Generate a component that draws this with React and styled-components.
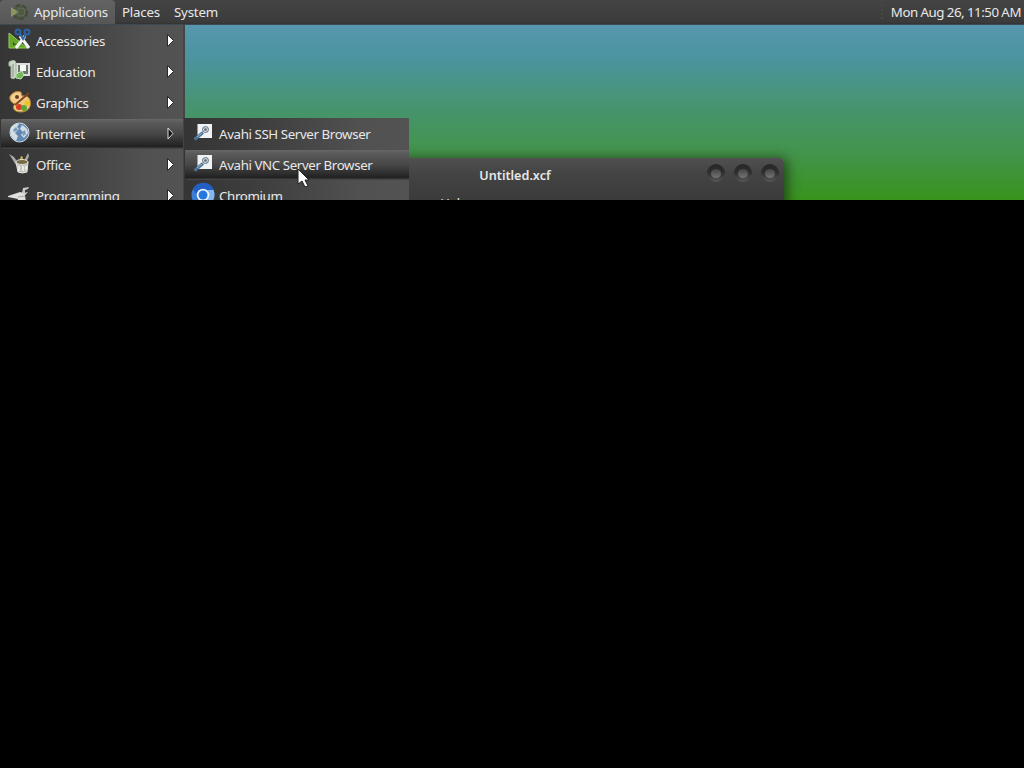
import React from 'react';
import styled, { createGlobalStyle } from 'styled-components';

const Global = createGlobalStyle`
  body { margin: 0; background: #000; overflow: hidden; }
  * { box-sizing: border-box; }
`;
const Screen = styled.div`
  width: 1024px; height: 768px; background: #000;
  font: 13.3px/18px "Noto Sans", sans-serif; color: #e8e8e8;
  letter-spacing: -0.2px;
`;
const Desktop = styled.main`
  position: relative; height: 200px; overflow: hidden;
  background: linear-gradient(#5797b0 25px, #4b94a0 58px, #46946e 108px, #43944c 153px, #38931c 200px);
`;
const Panel = styled.header`
  height: 25px; display: flex; align-items: stretch; white-space: nowrap;
  background: linear-gradient(#444, #3b3b3b 22px, #333 24px, #46626b);
`;
const PanelItem = styled.div`
  display: flex; align-items: center; height: 24px; padding-left: ${p => p.$pad || 7}px;
  width: ${p => p.$w}px; border-radius: 4px 4px 0 0;
  background: ${p => p.$active ? 'linear-gradient(#636363, #575757)' : 'transparent'};
  svg { margin-right: 6px; }
`;
const Clock = styled.time`
  margin-left: auto; height: 24px; display: flex; align-items: center; gap: 7px; padding-right: 3px;
  letter-spacing: -0.45px; word-spacing: -0.3px;
`;
const Grip = styled.i`width: 3px; height: 14px; border-left: 2px dotted #484848;`;
const Menu = styled.nav`
  position: absolute; z-index: 3; left: ${p => p.$x}px; top: ${p => p.$y}px; width: ${p => p.$w}px;
  background: linear-gradient(90deg, #353535, #3d3d3d 30%, #515151 80%, #535353);
  border-right: ${p => p.$edge ? '2px solid #444' : '0'};
  letter-spacing: ${p => p.$edge ? '-0.3px' : '-0.36px'}; word-spacing: -0.2px;
`;
const Item = styled.div`
  height: 31px; display: flex; align-items: center; padding: 0 8px 0 7px; margin-left: 1px; white-space: nowrap;
  border-radius: 3px 0 0 3px;
  background: ${p => p.$active ? 'linear-gradient(transparent 1px, #686868 1px, #5b5b5b 4px, #464646 16px, #202020 29px, #444 30px)' : 'transparent'};
  svg { flex: none; }
`;
const Label = styled.span`flex: 1; margin-left: ${p => p.$gap || 5}px;`;
const Window = styled.section`
  position: absolute; z-index: 1; left: 246px; top: 158px; width: 538px; height: 300px;
  background: linear-gradient(#505050, #444 15px, #3c3c3c 38px); border-radius: 5px;
  box-shadow: 2px 2px 12px 2px #1d3a16cc;
`;
const TitleBar = styled.div`
  height: 35px; display: flex; align-items: center; justify-content: center;
  font-weight: 600; font-size: 12.6px; letter-spacing: 0;
`;
const Controls = styled.div`
  position: absolute; right: 5px; top: 6px; display: flex; gap: 9px;
`;
const ControlButton = styled.i`
  width: 18px; height: 18px; padding: 5px 4px 3px; border-radius: 50%;
  background: linear-gradient(#262626, #303030 50%, #575757);
  &::before { content: ''; display: block; width: 10px; height: 9px; border-radius: 50%; background: linear-gradient(#444, #747474); }
`;
const WindowMenu = styled.div`display: flex; gap: 8px; padding: 1px 0 0 132px; font-size: 13px;`;
const Cursor = styled.svg`position: absolute; z-index: 5; left: 297px; top: 168px;`;

const art = {
  accessories: <><path d="M1 3v15h18Z" fill="#65a728" stroke="#98cf59"/><path d="M5 12v3h3Z" fill="#344c24"/><path d="M8 18 17 6M21 18 12 6" stroke="#f2f5f4" strokeWidth="3"/><circle cx="10" cy="2" r="2.5" fill="none" stroke="#2b63a9" strokeWidth="2"/><circle cx="19" cy="2" r="2.5" fill="none" stroke="#2b63a9" strokeWidth="2"/><path d="m12 4 3 5 3-5" stroke="#3268a5" strokeWidth="2" fill="none"/></>,
  education: <><path d="M9 3h12v11H9Z" fill="#687568" stroke="#ddd" strokeWidth="2"/><path d="M12 4h6v6h-6Z" fill="#f8f8f4"/><path d="M3 0q5-2 5 3v13q-2 3-5 1V5H1V1Z" fill="#cdd8ca" stroke="#a4b4a1"/><path d="M5 3v13" stroke="#829480"/><path d="m8 13 6-3 2 4-3 4-5-1Z" fill="#72b75a" stroke="#c6e4b8"/></>,
  graphics: <><path d="M3 3Q7-2 13 0l1 4q6-1 8 4c2 8-3 12-9 12-8 0-9-5-6-8-4-1-7-6-4-9Z" fill="#efc984" stroke="#b98035"/><path d="M3 6q3-5 9-4l1 4-4 3Z" fill="#efd59b"/><circle cx="9" cy="5" r="2" fill="#713c17"/><circle cx="11" cy="15" r="3" fill="#db3826"/><circle cx="16" cy="16" r="3" fill="#58a72e"/><circle cx="19" cy="11" r="2.5" fill="#e8c81d"/><path d="M21 1 7 13" stroke="#84451f" strokeWidth="2"/></>,
  internet: <><circle cx="11.5" cy="9.5" r="9.5" fill="#6188b4" stroke="#cad9e3"/><path d="M3 4q4-4 8-3l-2 3 2 2-4 4 3 3-2 5Q0 13 3 4m11-2q6 3 6 8l-4 5-3-3 2-3-3-3Z" fill="#d3dde2"/><path d="m5 7 3-3 2 3-4 2m8 0 3-2 1 4-3 2" fill="#7798b9"/></>,
  office: <><path d="m1 0 5 3 5 7-3 1Zm19-1 1 3-3 7h-3Z" fill="#aaa9a2"/><path d="m11 8 2-6 2 1-1 7" fill="#cda943"/><path d="M8 8h12l-1 10q-5 2-9 0Z" fill="#c5c4bc" stroke="#e7e7df"/><ellipse cx="14" cy="8" rx="6" ry="2.5" fill="#766c43" stroke="#ddd"/><path d="M11 12v5m4-5v5m3-5v4" stroke="#f3f3ef" strokeWidth="1.6"/></>,
  programming: <><path d="m0 11 12-4 4 1 4-1-3 3 1 8H9l1-4-10-2Z" fill="#dededc"/><path d="m14 8 1-5 6-1-1 2-3 1v4Z" fill="#c8c8c5"/><path d="m10 12 7-1" stroke="#aaa"/></>,
  avahi: <><path d="M5.5 1H20v14H5.5Z" fill="#f1f2f3"/><circle cx="13.5" cy="6.5" r="3" fill="#c8d3dc" stroke="#657385"/><circle cx="13.5" cy="6.5" r="1.3" fill="#5d6878"/><path d="m11 9.5-8.5 7" stroke="#4e7295" strokeWidth="3"/><path d="m10 10-5 4" stroke="#8db6d5"/></>,
  chromium: <><circle cx="11" cy="10" r="11.5" fill="#3b7ed7"/><path d="M1 4A11.5 11.5 0 0 1 22 5H11L6 12Z" fill="#225fc4"/><path d="M16 5h5.5a11.5 11.5 0 0 1-9 16l4-9Z" fill="#85b7eb"/><circle cx="11" cy="10" r="6.3" fill="#eef6ff"/><circle cx="11" cy="10" r="4.5" fill="#2677df"/></>,
};
const Icon = ({ name }) => <svg width="23" height="21" viewBox="0 0 23 21" overflow="visible">{art[name]}</svg>;
const Arrow = ({ active }) => <svg width="8" height="13" viewBox="0 0 8 13"><path d={active ? 'm1 1 5 5.5L1 12Z' : 'm0.5 .5 6 6-6 6Z'} fill={active ? '#111' : '#fff'} stroke={active ? '#ddd' : '#292929'} strokeWidth="1"/></svg>;
const categories = ['Accessories', 'Education', 'Graphics', 'Internet', 'Office', 'Programming'];

export default function App() {
  return <Screen><Global/><Desktop>
    <Panel>
      <PanelItem $active $pad={9} $w={115}><svg width="19" height="20" viewBox="0 0 19 20"><circle cx="11" cy="10" r="7" fill="#505846" stroke="#424b39" strokeWidth="2" strokeDasharray="5 2"/><path d="m2 5 8 5-8 5Z" fill="#8c9560"/><circle cx="12" cy="10" r="4" fill="none" stroke="#626955"/></svg>Applications</PanelItem>
      <PanelItem $w={52}>Places</PanelItem><PanelItem $w={60}>System</PanelItem>
      <Clock><Grip/>Mon Aug 26, 11:50 AM</Clock>
    </Panel>
    <Window><TitleBar>Untitled.xcf</TitleBar><Controls><ControlButton/><ControlButton/><ControlButton/></Controls><WindowMenu><span>Windows</span><span>Help</span></WindowMenu></Window>
    <Menu $x={0} $y={25} $w={185} $edge>{categories.map(c => <Item key={c} $active={c === 'Internet'}><Icon name={c.toLowerCase()}/><Label>{c}</Label><Arrow active={c === 'Internet'}/></Item>)}</Menu>
    <Menu $x={184} $y={118} $w={225}><Item><Icon name="avahi"/><Label $gap={4}>Avahi SSH Server Browser</Label></Item><Item $active><Icon name="avahi"/><Label $gap={4}>Avahi VNC Server Browser</Label></Item><Item><Icon name="chromium"/><Label $gap={4}>Chromium</Label></Item></Menu>
    <Cursor width="13" height="20" viewBox="0 0 13 20"><path d="M1 1v15l4-3 3 6 3-1-3-6h4Z" fill="#fff" stroke="#222"/></Cursor>
  </Desktop></Screen>;
}
